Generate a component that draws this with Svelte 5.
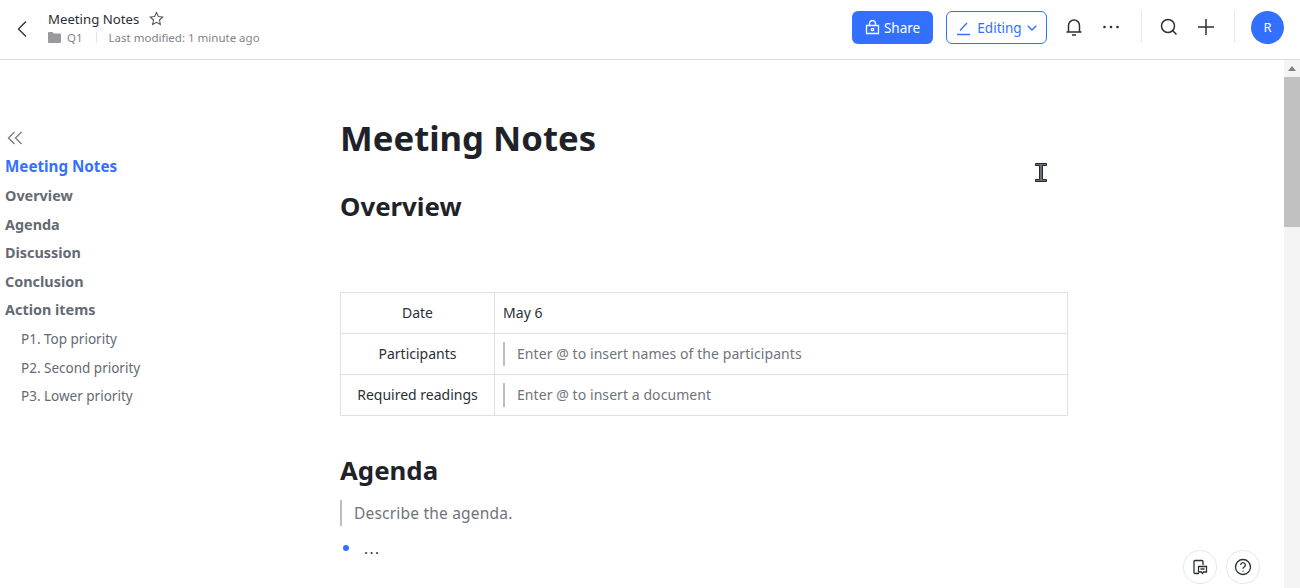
<script lang="ts">
	const outline = [
		{ label: 'Meeting Notes', active: true },
		{ label: 'Overview' },
		{ label: 'Agenda' },
		{ label: 'Discussion' },
		{ label: 'Conclusion' },
		{ label: 'Action items' }
	];
	const priorities = ['P1. Top priority', 'P2. Second priority', 'P3. Lower priority'];
</script>

<div class="page">
	<header class="topbar">
		<button class="back" aria-label="Back">
			<svg width="14" height="18" viewBox="0 0 14 18"><path d="M11 1.500 3.500 9l7.500 7.500" /></svg>
		</button>
		<div class="doc">
			<div class="doc-title">
				<span>Meeting Notes</span>
				<svg width="15" height="15" viewBox="0 0 16 16"><path d="M8 1.500l2 4.300 4.700.6-3.500 3.200.9 4.700L8 12l-4.100 2.300.9-4.700L1.300 6.400 6 5.800z" /></svg>
			</div>
			<div class="doc-meta">
				<svg width="13" height="11" viewBox="0 0 13 11"><path d="M0 1a1 1 0 0 1 1-1h3.500l1.200 1.500H12a1 1 0 0 1 1 1V10a1 1 0 0 1-1 1H1a1 1 0 0 1-1-1z" /></svg>
				<span class="folder">Q1</span>
				<i class="tick"></i>
				<span>Last modified: 1 minute ago</span>
			</div>
		</div>
		<div class="actions">
			<button class="share">
				<svg width="15" height="15" viewBox="0 0 15 15"><path d="M1.500 5.500h12v8h-12zM4.500 5.500V3.500a3 3 0 0 1 6 0v2" /><circle cx="7.500" cy="9.500" r="1.200" /></svg>
				Share
			</button>
			<button class="editing">
				<svg width="16" height="16" viewBox="0 0 16 16"><path d="M1 14.500h13M4 10.500l7-7.500" /></svg>
				Editing
				<svg width="10" height="6" viewBox="0 0 10 6"><path d="M.7.700 5 5l4.300-4.300" /></svg>
			</button>
			<button class="icon bell" aria-label="Notifications">
				<svg width="18" height="18" viewBox="0 0 18 18"><path d="M1.500 14h15M3.500 14V7.500a5.500 5.500 0 0 1 11 0V14M7 17h4" /></svg>
			</button>
			<button class="icon dots" aria-label="More">
				<svg width="18" height="4" viewBox="0 0 18 4"><circle cx="2.500" cy="2" r="1.300" /><circle cx="9" cy="2" r="1.300" /><circle cx="15.500" cy="2" r="1.300" /></svg>
			</button>
			<i class="sep"></i>
			<button class="icon search" aria-label="Search">
				<svg width="18" height="18" viewBox="0 0 18 18"><circle cx="8" cy="8" r="6.500" /><path d="M12.800 12.800 16.500 16.500" /></svg>
			</button>
			<button class="icon plus" aria-label="New">
				<svg width="16" height="16" viewBox="0 0 16 16"><path d="M8 0v16M0 8h16" /></svg>
			</button>
			<i class="sep"></i>
			<span class="avatar">R</span>
		</div>
	</header>

	<div class="body">
		<nav class="outline">
			<button class="collapse" aria-label="Collapse outline">
				<svg width="16" height="14" viewBox="0 0 16 14"><path d="M7.500 1 1.500 7l6 6M14.500 1l-6 6 6 6" /></svg>
			</button>
			{#each outline as item}
				<a class="heading" class:active={item.active} href="#top">{item.label}</a>
			{/each}
			{#each priorities as item}
				<a class="sub" href="#top">{item}</a>
			{/each}
		</nav>

		<main class="doc-body">
			<h1>Meeting Notes</h1>
			<h2 class="overview">Overview</h2>
			<table>
				<tbody>
					<tr>
						<th>Date</th>
						<td>May 6</td>
					</tr>
					<tr>
						<th>Participants</th>
						<td><span class="hint">Enter @ to insert names of the participants</span></td>
					</tr>
					<tr>
						<th>Required readings</th>
						<td><span class="hint">Enter @ to insert a document</span></td>
					</tr>
				</tbody>
			</table>
			<h2 class="agenda">Agenda</h2>
			<p class="describe">Describe the agenda.</p>
			<div class="bullet"><span class="dot"></span>...</div>
		</main>

		<div class="scrollbar">
			<span class="arrow"></span>
			<span class="thumb"></span>
		</div>

		<svg class="cursor" width="12" height="19" viewBox="0 0 12 19"><path d="M.5.500h11v2H7.500v14h4v2H.5v-2h4v-14H.5z" /></svg>

		<div class="floating">
			<button aria-label="Comments">
				<svg width="16" height="16" viewBox="0 0 16 16"><path d="M7 14.500H3a1 1 0 0 1-1-1v-11a1 1 0 0 1 1-1h7a1 1 0 0 1 1 1V6" /><path class="fill" d="M6.500 7.500h8v5.500h-3L10.500 14.500 9.500 13h-3zM8.500 10h4" /></svg>
			</button>
			<button aria-label="Help">
				<svg width="18" height="18" viewBox="0 0 18 18"><circle cx="9" cy="9" r="7.500" /><path d="M6.700 7a2.300 2.300 0 1 1 3.500 2c-.8.500-1.200.9-1.200 1.800" /><circle class="solid" cx="9" cy="13.200" r=".6" /></svg>
			</button>
		</div>
	</div>
</div>

<style>
	:global(body) {
		margin: 0;
		background: #fff;
		overflow: hidden;
	}

	.page {
		height: 588px;
		display: flex;
		flex-direction: column;
		font-family: "Noto Sans", "DejaVu Sans", sans-serif;
		color: #1f2329;
	}

	button {
		border: none;
		background: none;
		padding: 0;
		font: inherit;
		display: inline-flex;
		align-items: center;
		justify-content: center;
	}

	svg {
		fill: none;
		stroke: currentColor;
		stroke-width: 1.300;
		display: block;
	}

	.topbar {
		height: 59px;
		flex: none;
		display: flex;
		align-items: center;
		border-bottom: 1px solid #dcdcdc;
		padding: 0 17px 0 15px;
	}

	.back {
		width: 14px;
		color: #2b2f36;
		margin: -2px 19px 0 0;
	}

	.doc {
		display: flex;
		flex-direction: column;
		gap: 2px;
		margin-top: -4px;
	}

	.doc-title {
		display: flex;
		align-items: center;
		gap: 10px;
		font-size: 13.200px;
		line-height: 18px;
		color: #2b2f36;
	}

	.doc-title svg {
		color: #4e5358;
		stroke-width: 1.100;
		margin-top: -2px;
	}

	.doc-meta {
		display: flex;
		align-items: center;
		font-size: 11.500px;
		line-height: 15px;
		color: #7f8389;
	}

	.doc-meta svg {
		fill: #9a9a9e;
		stroke: none;
	}

	.folder {
		margin-left: 6px;
	}

	.tick {
		width: 1px;
		height: 11px;
		background: #e4e5e7;
		margin: 0 12px 0 13px;
	}

	.actions {
		margin-left: auto;
		display: flex;
		align-items: center;
		margin-top: -5px;
	}

	.share {
		width: 81px;
		height: 33px;
		gap: 4px;
		background: #3370ff;
		color: #fff;
		border-radius: 6px;
		font-size: 13.500px;
		line-height: 20px;
		padding-top: 1px;
		box-sizing: border-box;
	}

	.editing {
		width: 101px;
		height: 33px;
		gap: 5px;
		margin-left: 13px;
		border: 1px solid #3370ff;
		border-radius: 6px;
		background: #fff;
		color: #3370ff;
		font-size: 13.500px;
		line-height: 20px;
		padding-top: 1px;
		box-sizing: border-box;
	}

	.icon {
		color: #2b2f36;
	}

	.bell {
		margin-left: 18px;
	}

	.bell svg {
		stroke-width: 1.500;
	}

	.dots {
		margin-left: 19px;
	}

	.dots svg {
		fill: #2b2f36;
		stroke: none;
	}

	.sep {
		width: 1px;
		height: 32px;
		background: #e8e9eb;
	}

	.dots + .sep {
		margin-left: 21px;
	}

	.search {
		margin-left: 18px;
	}

	.search svg {
		stroke-width: 1.500;
	}

	.plus {
		margin-left: 20px;
	}

	.plus svg {
		stroke-width: 1.500;
	}

	.plus + .sep {
		margin-left: 20px;
	}

	.avatar {
		width: 33px;
		height: 33px;
		border-radius: 50%;
		background: #3370ff;
		color: #fff;
		margin-left: 16px;
		margin-right: -1px;
		display: flex;
		align-items: center;
		justify-content: center;
		font-size: 13px;
	}

	.body {
		flex: 1;
		min-height: 0;
		display: flex;
		position: relative;
		overflow: hidden;
	}

	.outline {
		width: 340px;
		flex: none;
		display: flex;
		flex-direction: column;
		padding: 70px 0 0 5px;
		box-sizing: border-box;
	}

	.collapse {
		width: 18px;
		height: 16px;
		margin: 0 0 6px 2px;
		color: #767a80;
		justify-content: flex-start;
	}

	.heading,
	.sub {
		text-decoration: none;
		line-height: 28.600px;
		white-space: nowrap;
	}

	.heading {
		font-size: 14.400px;
		font-weight: 700;
		color: #646a73;
	}

	.heading.active {
		color: #3370ff;
		font-size: 15.200px;
		padding-bottom: 1.400px;
	}

	.sub {
		font-size: 13.500px;
		color: #646a73;
		padding-left: 16px;
	}

	.doc-body {
		width: 728px;
		flex: none;
	}

	h1 {
		margin: 55px 0 0;
		font-size: 34.700px;
		line-height: 46px;
		font-weight: 700;
		color: #1f2329;
	}

	h2 {
		margin: 0;
		font-size: 25.800px;
		line-height: 36px;
		font-weight: 700;
		color: #1f2329;
	}

	.overview {
		margin-top: 27px;
	}

	table {
		width: 728px;
		margin-top: 68px;
		border-collapse: collapse;
		table-layout: fixed;
		font-size: 14px;
	}

	th,
	td {
		height: 41px;
		padding: 0 0 2px;
		border: 1px solid #dee0e3;
		font-weight: 400;
		color: #2b2f36;
		box-sizing: border-box;
	}

	th {
		width: 154px;
		text-align: center;
	}

	td {
		padding-left: 8px;
		letter-spacing: 0.07px;
	}

	.hint {
		display: block;
		border-left: 2px solid #bbbfc4;
		padding-left: 12px;
		color: #6f747b;
		line-height: 24px;
		margin: 2px 0 0;
	}

	.agenda {
		margin-top: 36px;
	}

	.describe {
		margin: 12px 0 0;
		border-left: 2px solid #bbbfc4;
		padding-left: 12px;
		font-size: 15.500px;
		letter-spacing: 0.2px;
		line-height: 26px;
		color: #6f747b;
	}

	.bullet {
		display: flex;
		align-items: center;
		margin-top: 10px;
		font-size: 15px;
		letter-spacing: 1.500px;
		line-height: 24px;
		color: #2b2f36;
	}

	.dot {
		width: 6px;
		height: 6px;
		border-radius: 50%;
		background: #3370ff;
		margin: 0 15px 0 3px;
	}

	.scrollbar {
		position: absolute;
		right: 0;
		top: 0;
		bottom: 0;
		width: 16px;
		background: #f4f4f4;
	}

	.arrow {
		position: absolute;
		left: 4px;
		top: 6px;
		border: 4px solid transparent;
		border-top: 0;
		border-bottom: 5px solid #7f7f7f;
	}

	.thumb {
		position: absolute;
		left: 0;
		top: 17px;
		width: 16px;
		height: 150px;
		background: #c1c1c1;
	}

	.cursor {
		position: absolute;
		left: 1035px;
		top: 103px;
		fill: #6b7078;
		stroke: #25282d;
		stroke-width: 1;
	}

	.floating {
		position: absolute;
		right: 40px;
		bottom: 4px;
		display: flex;
		gap: 9px;
	}

	.floating button {
		width: 34px;
		height: 34px;
		border-radius: 50%;
		background: #fff;
		border: 1px solid #e6e7e9;
		box-sizing: border-box;
		color: #2b2f36;
	}

	.floating .solid {
		fill: currentColor;
		stroke: none;
	}
</style>
